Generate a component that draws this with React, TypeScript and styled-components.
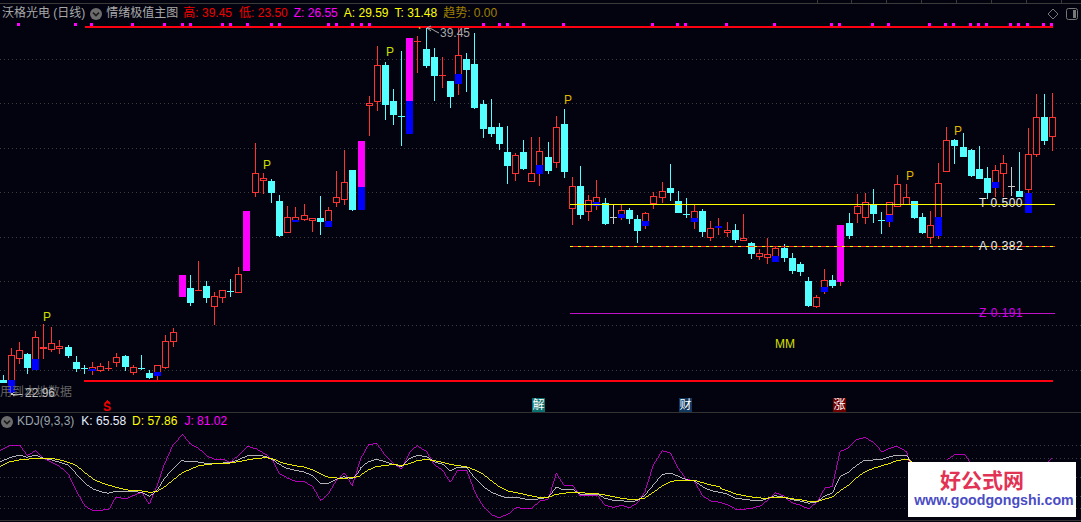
import React from "react";
import styled, { createGlobalStyle } from "styled-components";

const BG = "#02030f";
const RED = "#ff3232";
const CYAN = "#54ffff";
const BLUE = "#0000ff";
const MAGENTA = "#ff00ff";
const YELLOW = "#ffff00";
const FONT = `"Liberation Sans", "Noto Sans CJK SC", sans-serif`;

const Global = createGlobalStyle`
  html, body { margin: 0; padding: 0; background: ${BG}; }
  body { font-family: ${FONT}; overflow: hidden; }
`;

const Page = styled.div`
  position: relative;
  width: 1081px;
  height: 522px;
  background: ${BG};
  display: flex;
  flex-direction: column;
  overflow: hidden;
`;
const Ruler = styled.svg`
  display: block;
  width: 1081px;
  height: 5px;
  flex: none;
`;
const InfoBar = styled.div`
  display: flex;
  align-items: center;
  height: 17px;
  flex: none;
  padding: 0 3px 0 2px;
  font-size: 12px;
  line-height: 17px;
  white-space: nowrap;
`;
const Quote = styled.span<{ $color: string; $gap?: number }>`
  color: ${(p) => p.$color};
  margin-left: ${(p) => p.$gap ?? 6}px;
`;
const Toggle = styled.svg<{ $gap: number }>`
  width: 12px;
  height: 12px;
  flex: none;
  margin-left: ${(p) => p.$gap}px;
`;
const ToolIcons = styled.div`
  display: flex;
  align-items: center;
  gap: 7px;
  margin-left: auto;
`;
const ChartArea = styled.div`
  position: relative;
  width: 1081px;
  height: 390px;
  flex: none;
`;
const Canvas = styled.svg<{ $h: number }>`
  position: relative;
  z-index: 1;
  display: block;
  width: 1081px;
  height: ${(p) => p.$h}px;
`;
const Tag = styled.span<{ $x: number; $y: number; $color: string }>`
  position: absolute;
  left: ${(p) => p.$x}px;
  top: ${(p) => p.$y - 22 - 7}px;
  z-index: 2;
  height: 14px;
  line-height: 14px;
  font-size: 12px;
  color: ${(p) => p.$color};
  white-space: nowrap;
`;
const CutTag = styled(Tag)`
  clip-path: inset(9px 0 0 0);
`;
const LevelTag = styled(Tag)`
  letter-spacing: 0.5px;
`;
const NewsBadge = styled.span<{ $x: number; $bg: string }>`
  position: absolute;
  left: ${(p) => p.$x}px;
  top: 376px;
  z-index: 2;
  width: 13px;
  height: 14px;
  line-height: 14px;
  font-size: 12px;
  text-align: center;
  color: #fff;
  background: ${(p) => p.$bg};
`;
const SignalMark = styled.span`
  position: absolute;
  left: 103px;
  top: 379px;
  z-index: 2;
  height: 12px;
  line-height: 12px;
  font-size: 12px;
  font-weight: bold;
  color: #f00000;
`;
const KdjPane = styled.section`
  display: flex;
  flex-direction: column;
  flex: none;
  height: 107px;
  border-top: 1px solid #333;
  border-bottom: 1px solid #333;
`;
const KdjBar = styled.div`
  display: flex;
  align-items: center;
  height: 17px;
  flex: none;
  padding-left: 1px;
  font-size: 12px;
  line-height: 17px;
  white-space: nowrap;
`;
const Watermark = styled.aside`
  position: absolute;
  left: 908px;
  top: 462px;
  z-index: 3;
  width: 168px;
  height: 55px;
  background: #fff;
  display: flex;
  flex-direction: column;
  align-items: center;
`;
const WmTitle = styled.div`
  font-family: "Noto Sans CJK SC", sans-serif;
  font-weight: 700;
  font-size: 21px;
  line-height: 23px;
  margin: 6px 20px 0 0;
  color: #e23355;
`;
const WmUrl = styled.div`
  font-family: "Liberation Sans", sans-serif;
  font-weight: 700;
  font-size: 14.2px;
  line-height: 18px;
  margin-left: 4px;
  color: #4a4cc4;
`;

type Row = [number, string, number, number, number, number, number?, number?];
const candles: Row[] = [
  [3, "c", 380, 383, 375, 383],
  [11, "r", 355, 393, 348, 393, 380, 393],
  [19, "r", 350, 359, 342, 364],
  [27, "c", 354, 368, 353, 374],
  [35, "r", 337, 369, 331, 370, 359, 370],
  [43, "d", 347, 349, 324, 359],
  [51, "r", 343, 350, 327, 352],
  [59, "r", 346, 349, 340, 354],
  [68, "c", 347, 356, 345, 358],
  [76, "c", 362, 369, 356, 372],
  [84, "e", 368, 369, 365, 374],
  [92, "r", 367, 371, 362, 375, 369, 371],
  [100, "r", 366, 371, 363, 372],
  [108, "d", 368, 369, 361, 371],
  [116, "r", 357, 363, 353, 367],
  [125, "c", 356, 367, 355, 371],
  [133, "r", 367, 373, 365, 375],
  [141, "e", 368, 369, 355, 370],
  [149, "c", 373, 378, 370, 379],
  [157, "r", 365, 376, 365, 381, 372, 376],
  [165, "r", 341, 368, 335, 369],
  [173, "r", 332, 342, 328, 347],
  [182, "m", 275, 297, 275, 297],
  [190, "c", 288, 303, 275, 306],
  [198, "d", 290, 291, 261, 291],
  [206, "c", 286, 298, 281, 303],
  [214, "r", 296, 307, 292, 325],
  [222, "r", 290, 298, 290, 303],
  [230, "e", 291, 292, 279, 297],
  [238, "r", 274, 293, 267, 293],
  [246, "m", 211, 271, 211, 271],
  [255, "r", 173, 193, 143, 197],
  [263, "r", 178, 181, 173, 194],
  [271, "c", 181, 193, 179, 203],
  [279, "c", 201, 236, 195, 237],
  [287, "r", 217, 233, 206, 233],
  [295, "r", 217, 222, 207, 222, 220, 222],
  [304, "r", 215, 220, 204, 221],
  [312, "r", 218, 221, 218, 232],
  [320, "c", 218, 222, 196, 235],
  [328, "r", 210, 227, 207, 227, 221, 227],
  [336, "r", 197, 203, 171, 207],
  [344, "r", 182, 200, 150, 205],
  [352, "c", 170, 210, 170, 211],
  [361, "m", 141, 210, 141, 210, 187, 210],
  [369, "r", 103, 106, 96, 136],
  [377, "r", 65, 102, 46, 111],
  [385, "c", 65, 105, 62, 120],
  [393, "c", 101, 115, 89, 125],
  [401, "e", 116, 117, 51, 146],
  [409, "m", 38, 134, 38, 134, 101, 134],
  [417, "d", 41, 42, 36, 73],
  [426, "c", 49, 66, 27, 68],
  [434, "c", 57, 76, 48, 101],
  [442, "d", 75, 76, 57, 88],
  [450, "c", 81, 97, 81, 108],
  [458, "r", 55, 83, 28, 95, 74, 84],
  [466, "c", 59, 70, 53, 92],
  [474, "c", 64, 108, 33, 109],
  [483, "c", 104, 129, 100, 138],
  [491, "c", 127, 134, 99, 137],
  [499, "c", 127, 144, 123, 150],
  [507, "c", 152, 166, 126, 184],
  [515, "r", 155, 174, 153, 181],
  [523, "c", 152, 169, 140, 170],
  [531, "r", 173, 182, 137, 182],
  [539, "r", 151, 174, 137, 186, 165, 174],
  [548, "c", 157, 171, 142, 174],
  [556, "r", 127, 163, 116, 168],
  [564, "c", 124, 172, 109, 178],
  [572, "r", 186, 209, 177, 225],
  [580, "c", 186, 215, 166, 219],
  [588, "r", 200, 212, 195, 221],
  [596, "r", 197, 205, 180, 210, 202, 206],
  [605, "c", 203, 224, 198, 225],
  [613, "g", 217, 218, 205, 224],
  [621, "r", 210, 218, 205, 220, 214, 218],
  [629, "c", 210, 219, 208, 224],
  [637, "c", 219, 231, 215, 243],
  [645, "r", 213, 226, 212, 229, 221, 226],
  [653, "r", 196, 204, 192, 209],
  [662, "r", 191, 198, 182, 203],
  [670, "c", 188, 193, 164, 201],
  [678, "c", 201, 213, 191, 213],
  [686, "e", 214, 215, 198, 218],
  [694, "r", 211, 221, 205, 229, 218, 222],
  [702, "c", 211, 232, 209, 237],
  [710, "r", 228, 238, 221, 241],
  [718, "r", 226, 228, 218, 235, 226, 228],
  [727, "r", 230, 233, 222, 237],
  [735, "c", 230, 240, 224, 243],
  [743, "r", 238, 241, 214, 241],
  [751, "c", 243, 254, 242, 259],
  [759, "r", 253, 257, 249, 260],
  [767, "r", 254, 258, 238, 264],
  [775, "r", 248, 258, 246, 262, 256, 262],
  [784, "c", 248, 258, 244, 262],
  [792, "c", 258, 271, 253, 274],
  [800, "c", 264, 272, 262, 276],
  [808, "c", 281, 306, 277, 307],
  [816, "r", 297, 307, 295, 308],
  [824, "r", 280, 290, 269, 294, 287, 292],
  [832, "c", 280, 286, 275, 288],
  [840, "m", 225, 282, 225, 286],
  [849, "c", 223, 236, 213, 239],
  [857, "r", 206, 214, 194, 223],
  [865, "r", 202, 218, 193, 224],
  [873, "c", 204, 214, 189, 223],
  [881, "e", 220, 221, 212, 234],
  [889, "r", 202, 215, 202, 227, 215, 222],
  [897, "r", 184, 207, 175, 207],
  [906, "r", 197, 205, 184, 205],
  [914, "c", 201, 218, 201, 219],
  [922, "c", 217, 233, 213, 234],
  [930, "r", 225, 238, 211, 244],
  [938, "r", 183, 230, 163, 239, 217, 236],
  [946, "r", 140, 172, 127, 172],
  [954, "c", 140, 146, 139, 164],
  [963, "c", 147, 157, 133, 157],
  [971, "c", 150, 176, 149, 177],
  [979, "c", 169, 179, 146, 179],
  [987, "c", 178, 193, 167, 199],
  [995, "r", 170, 185, 165, 197, 182, 188],
  [1003, "r", 163, 174, 155, 197],
  [1011, "g", 186, 187, 167, 196],
  [1019, "c", 191, 197, 152, 197],
  [1028, "r", 154, 190, 128, 213, 193, 213],
  [1036, "r", 117, 155, 94, 157],
  [1044, "c", 117, 141, 94, 145],
  [1052, "r", 117, 137, 93, 151],
];

const ticks = [18, 75, 91, 132, 164, 182, 190, 222, 230, 247, 271, 279, 328, 336, 352, 361, 369, 483, 499, 507, 523, 563, 652, 677, 685, 726, 774, 831, 839, 872, 888, 929, 945, 953, 970, 978, 986, 1010, 1018, 1027, 1043, 1051];
const mainGrid = [59, 103, 148, 192, 237, 281, 325, 370];
const kdjGrid = [445, 458, 477, 496, 508];
const rulerTicks = [817, 851, 886, 921, 956, 991, 1026, 1061];

const Candle = ({ d }: { d: Row }) => {
  const [x, t, top, bot, wt, wb, bt, bb] = d;
  const left = x - 3;
  if (t === "m") {
    return (
      <g>
        {wb > bot && <rect x={x} y={bot} width={1} height={wb - bot} fill={RED} />}
        <rect x={left} y={top} width={7} height={bot - top} fill={MAGENTA} />
        {bt !== undefined && <rect x={left} y={bt} width={7} height={bot - bt} fill={BLUE} />}
      </g>
    );
  }
  if (t === "d" || t === "e" || t === "g") {
    const col = t === "d" ? RED : t === "e" ? CYAN : "#c8c8c8";
    return (
      <g>
        <rect x={x} y={wt} width={1} height={wb - wt} fill={col} />
        <rect x={left} y={top} width={7} height={bot - top} fill={col} />
      </g>
    );
  }
  const col = t === "r" ? RED : CYAN;
  return (
    <g>
      <rect x={x} y={wt} width={1} height={wb - wt} fill={col} />
      {t === "r" ? (
        <rect x={left + 0.5} y={top + 0.5} width={6} height={bot - top - 1} fill={BG} stroke={RED} strokeWidth={1} />
      ) : (
        <rect x={left} y={top} width={7} height={bot - top} fill={CYAN} />
      )}
      {bt !== undefined && bb !== undefined && <rect x={left} y={bt} width={7} height={bb - bt} fill={BLUE} />}
    </g>
  );
};

const toPts = (base: number, raw: number[][]) =>
  raw.map(([x, y]) => `${(base + x / 3).toFixed(1)},${(405 + y / 3).toFixed(1)}`).join(" ");

const J1 = [[0,137],[8,133],[30,121],[60,121],[82,152],[106,137],[130,160],[155,172],[180,185],[205,207],[230,260],[255,303],[277,316],[303,316],[327,313],[347,277],[378,281],[402,271],[425,262],[448,298],[470,245],[492,180],[518,122],[548,88],[570,116],[595,130],[625,155],[650,165],[670,162],[690,172],[715,152],[742,124],[770,132],[800,150],[820,170],[838,205],[860,218],[885,228],[912,229],[938,245],[962,287],[985,267],[1010,225],[1033,203],[1057,242],[1080,168]];
const K1 = [[0,170],[8,167],[30,158],[58,150],[80,157],[106,150],[130,160],[155,165],[180,172],[205,180],[230,208],[255,235],[280,252],[303,260],[325,265],[347,259],[378,260],[402,260],[425,262],[448,274],[470,258],[492,222],[518,192],[545,167],[570,170],[595,171],[625,176],[650,175],[670,174],[690,173],[715,165],[742,152],[770,150],[800,155],[820,165],[838,178],[860,190],[885,196],[912,201],[938,212],[962,235],[985,235],[1010,222],[1033,215],[1057,222],[1080,196]];
const D1 = [[0,184],[8,181],[30,170],[58,165],[80,163],[106,160],[130,160],[155,160],[180,165],[205,172],[230,182],[255,203],[280,222],[303,233],[325,240],[347,247],[378,254],[402,257],[425,258],[448,262],[470,260],[492,247],[518,226],[545,205],[570,193],[595,183],[625,178],[650,176],[670,176],[690,174],[715,170],[742,165],[770,160],[800,158],[820,162],[838,170],[860,177],[885,182],[912,186],[938,195],[962,207],[985,217],[1010,219],[1033,220],[1057,218],[1080,214]];
const J2 = [[0,165],[25,120],[50,115],[75,150],[100,175],[125,192],[150,140],[172,122],[200,140],[222,178],[248,196],[271,232],[293,196],[320,196],[345,262],[370,305],[395,330],[418,338],[445,327],[468,308],[490,310],[515,310],[540,288],[565,283],[589,205],[612,241],[638,241],[660,272],[690,272],[712,270],[735,301],[760,307],[785,301],[808,308],[832,295],[855,260],[880,180],[907,137],[932,145],[955,190],[978,222],[1003,228],[1028,273],[1053,288],[1080,292]];
const K2 = [[0,190],[25,170],[50,163],[75,170],[100,178],[125,185],[150,160],[172,151],[200,155],[222,170],[248,178],[271,197],[293,187],[320,187],[345,220],[370,245],[395,262],[418,272],[445,279],[468,277],[490,281],[515,285],[540,281],[565,277],[589,246],[612,255],[638,252],[660,268],[690,268],[712,268],[735,280],[760,286],[785,287],[808,290],[832,287],[855,270],[880,240],[907,208],[932,205],[955,213],[978,224],[1003,228],[1028,245],[1053,257],[1080,262]];
const D2 = [[0,212],[25,195],[50,184],[75,182],[100,178],[125,182],[150,175],[172,167],[200,163],[222,167],[248,172],[271,178],[293,182],[320,185],[345,195],[370,208],[395,228],[418,245],[445,258],[468,263],[490,267],[515,273],[540,278],[565,277],[589,268],[612,265],[638,261],[660,263],[690,265],[712,266],[735,270],[760,275],[785,280],[808,283],[832,283],[855,279],[880,262],[907,243],[932,230],[955,226],[978,226],[1003,226],[1028,233],[1053,240],[1080,246]];
const J3 = [[0,292],[24,300],[48,313],[72,313],[96,310],[122,302],[144,285],[166,263],[190,272],[215,293],[240,300],[266,312],[292,290],[315,248],[337,245],[360,140],[386,128],[408,105],[435,97],[460,112],[486,140],[510,130],[530,124],[560,140],[568,170]];
const K3 = [[0,262],[24,268],[48,280],[72,283],[96,286],[122,288],[144,280],[166,272],[190,276],[215,284],[240,288],[266,295],[292,290],[315,272],[337,265],[360,215],[386,202],[408,182],[435,165],[460,165],[486,163],[510,155],[530,150],[560,153],[575,170]];
const D3 = [[0,250],[24,258],[48,267],[72,272],[96,276],[122,279],[144,279],[166,278],[190,277],[215,281],[240,284],[266,289],[292,290],[315,282],[337,276],[360,258],[386,240],[408,220],[435,200],[460,190],[486,182],[510,175],[530,167],[560,162],[578,172]];

const joined = (a: number[][], b: number[][], c: number[][]) =>
  `${toPts(0, a)} ${toPts(360, b)} ${toPts(720, c)}`;

const ChevronDisc = ({ gap }: { gap: number }) => (
  <Toggle $gap={gap} viewBox="0 0 12 12">
    <circle cx="6" cy="6" r="6" fill="#6c6c6c" />
    <path d="M3 4.6 L6 7.6 L9 4.6" fill="none" stroke="#1c1c1c" strokeWidth="1.6" />
  </Toggle>
);

export default function App() {
  return (
    <>
      <Global />
      <Page>
        <Ruler viewBox="0 0 1081 5" shapeRendering="crispEdges">
          <rect x="0" y="3" width="1081" height="1" fill="#3a3a3a" />
          {rulerTicks.map((x) => (
            <rect key={x} x={x} y="0" width="1" height="3" fill="#3a3a3a" />
          ))}
        </Ruler>
        <InfoBar>
          <Quote $color="#a8a8a8" $gap={0}>沃格光电 (日线)</Quote>
          <ChevronDisc gap={5} />
          <Quote $color="#a8a8a8" $gap={4}>情绪极值主图</Quote>
          <Quote $color="#f00000" $gap={5}>高: 39.45</Quote>
          <Quote $color="#f00000" $gap={7}>低: 23.50</Quote>
          <Quote $color={MAGENTA} $gap={6}>Z: 26.55</Quote>
          <Quote $color={YELLOW} $gap={6}>A: 29.59</Quote>
          <Quote $color={YELLOW} $gap={6}>T: 31.48</Quote>
          <Quote $color="#a08000" $gap={6}>趋势: 0.00</Quote>
          <ToolIcons>
            <svg width="12" height="12" viewBox="0 0 12 12">
              <path d="M6 1 L11 6 L6 11 L1 6 Z" fill="none" stroke="#777" strokeWidth="1" />
            </svg>
            <svg width="12" height="12" viewBox="0 0 12 12">
              <rect x="0.5" y="0.5" width="11" height="11" rx="2" fill="none" stroke="#777" strokeWidth="1" />
              <rect x="7" y="2" width="3" height="8" fill="#777" />
            </svg>
          </ToolIcons>
        </InfoBar>
        <ChartArea>
          <Canvas $h={390} viewBox="0 22 1081 390" shapeRendering="crispEdges">
            {mainGrid.map((y) => (
              <line key={y} x1="0" x2="1081" y1={y + 0.5} y2={y + 0.5} stroke="#3c3c3c" strokeDasharray="1 3" />
            ))}
            {candles.map((d) => (
              <Candle key={d[0]} d={d} />
            ))}
            {ticks.map((x) => (
              <rect key={x} x={x - 1} y="23" width="3" height="3" fill={MAGENTA} />
            ))}
            <rect x="85" y="26" width="968" height="2" fill="#ff0010" />
            <rect x="84" y="380" width="969" height="2" fill="#ff0010" />
            <rect x="570" y="204" width="485" height="1" fill={YELLOW} />
            <rect x="570" y="246" width="485" height="1" fill={RED} />
            <line x1="570" x2="1055" y1="246.5" y2="246.5" stroke={YELLOW} strokeDasharray="3 5" />
            <rect x="570" y="313" width="485" height="1" fill="#c010c8" />
            <path d="M427 28 L431 26 M427 28 L431 31 M427 28 L432 29 L435 31 L439 33" fill="none" stroke="#a8a8a8" strokeWidth="1" shapeRendering="auto" />
            <path d="M11 394 L23 394 M11 394 L15 392 M11 394 L15 396" fill="none" stroke="#c8c8c8" strokeWidth="1" />
            <path d="M107 400 L110 403 L104 403 Z" fill="#f00000" />
          </Canvas>
          <CutTag $x={418} $y={25} $color="#d8d000">P</CutTag>
          <Tag $x={43} $y={317} $color="#c8e000">P</Tag>
          <Tag $x={263} $y={165} $color="#c8e000">P</Tag>
          <Tag $x={386} $y={52} $color="#c8e000">P</Tag>
          <Tag $x={564} $y={100} $color="#e0b800">P</Tag>
          <Tag $x={906} $y={176} $color="#e0b800">P</Tag>
          <Tag $x={954} $y={131} $color="#e0b800">P</Tag>
          <Tag $x={440} $y={33} $color="#a8a8a8">39.45</Tag>
          <Tag $x={0} $y={392} $color="#666">用到本地数据</Tag>
          <Tag $x={25} $y={393} $color="#c0c0c0">22.96</Tag>
          <LevelTag $x={979} $y={203} $color="#e8e8e8">T 0.500</LevelTag>
          <LevelTag $x={979} $y={246} $color="#e8e8e8">A 0.382</LevelTag>
          <LevelTag $x={979} $y={313} $color="#d000e8">Z 0.191</LevelTag>
          <Tag $x={775} $y={344} $color="#d8e000">MM</Tag>
          <SignalMark>S</SignalMark>
          <NewsBadge $x={532} $bg="#0a7070">解</NewsBadge>
          <NewsBadge $x={679} $bg="#103860">财</NewsBadge>
          <NewsBadge $x={833} $bg="#700000">涨</NewsBadge>
        </ChartArea>
        <KdjPane>
          <KdjBar>
            <ChevronDisc gap={0} />
            <Quote $color="#9aa4ac" $gap={4}>KDJ(9,3,3)</Quote>
            <Quote $color="#e8f0ff" $gap={7}>K: 65.58</Quote>
            <Quote $color={YELLOW} $gap={6}>D: 57.86</Quote>
            <Quote $color={MAGENTA} $gap={7}>J: 81.02</Quote>
          </KdjBar>
          <Canvas $h={89} viewBox="0 430 1081 89" shapeRendering="crispEdges">
            {kdjGrid.map((y) => (
              <line key={y} x1="0" x2="1081" y1={y + 0.5} y2={y + 0.5} stroke="#3c3c3c" strokeDasharray="1 3" />
            ))}
            <polyline points={joined(J1, J2, J3)} fill="none" stroke={MAGENTA} strokeWidth="0.7" />
            <polyline points={toPts(720, [[680,165],[705,148],[735,150],[750,172]])} fill="none" stroke={MAGENTA} strokeWidth="0.7" />
            <polyline points={toPts(720, [[982,172],[995,160]])} fill="none" stroke={MAGENTA} strokeWidth="0.7" />
            <polyline points={joined(K1, K2, K3)} fill="none" stroke="#ffffff" strokeWidth="0.7" />
            <polyline points={joined(D1, D2, D3)} fill="none" stroke={YELLOW} strokeWidth="0.9" />
          </Canvas>
        </KdjPane>
        <Watermark>
          <WmTitle>好公式网</WmTitle>
          <WmUrl>www.goodgongshi.com</WmUrl>
        </Watermark>
      </Page>
    </>
  );
}
